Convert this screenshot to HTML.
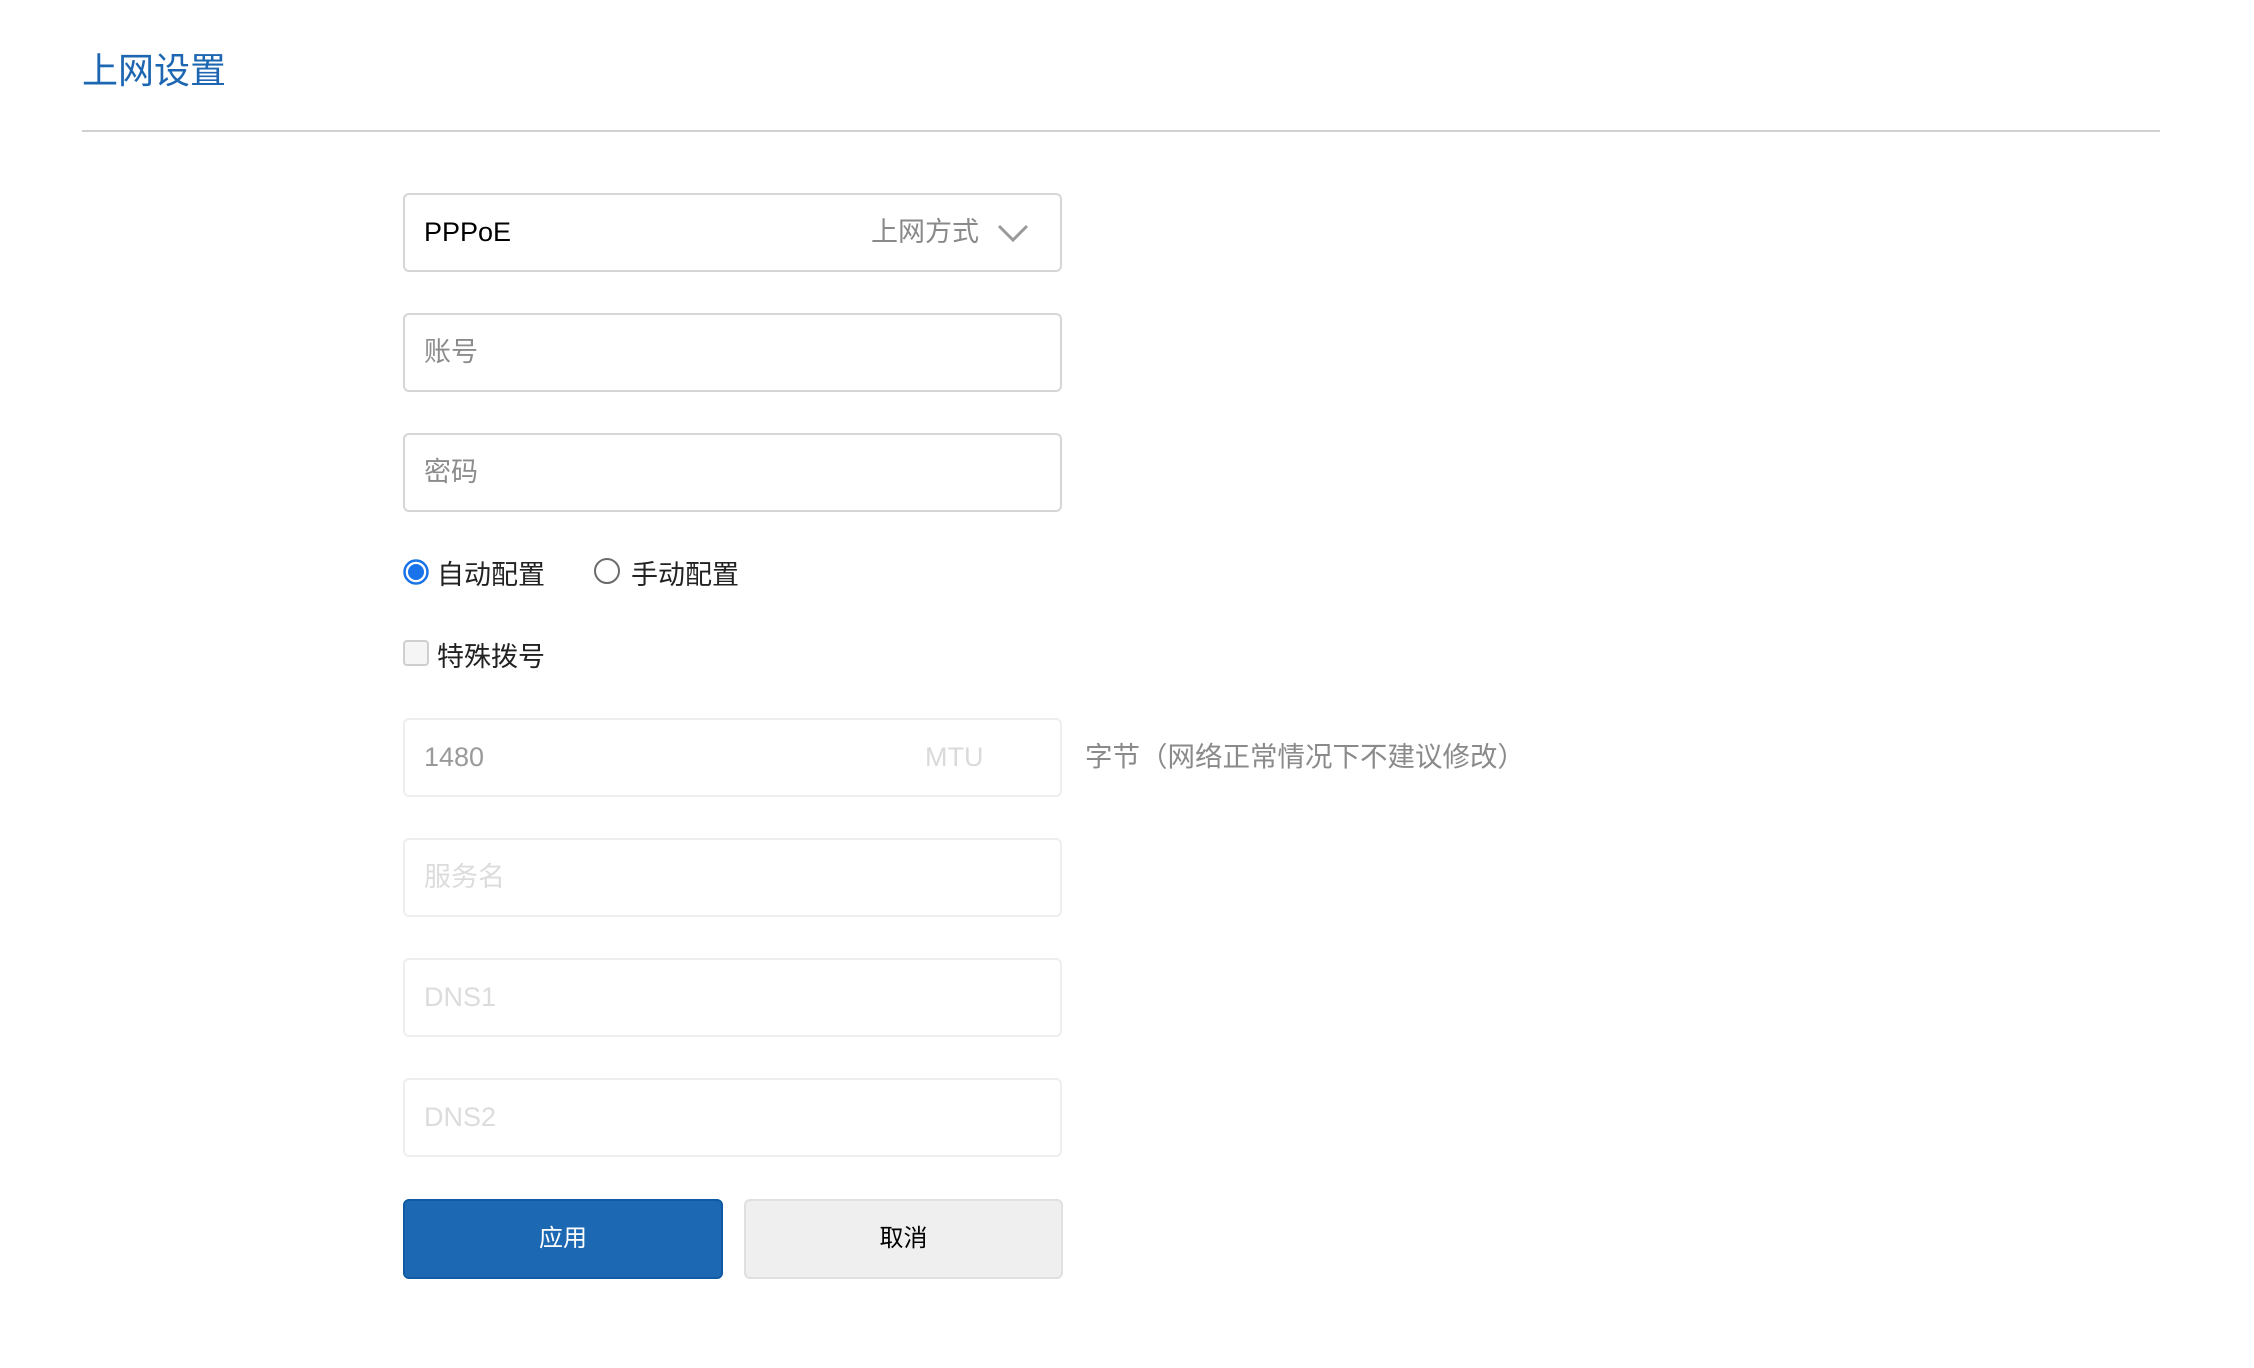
<!DOCTYPE html>
<html><head><meta charset="utf-8"><style>
html,body{margin:0;padding:0;background:#fff;width:2254px;height:1368px;overflow:hidden;font-family:"Liberation Sans","Noto Sans CJK SC",sans-serif;}
.abs{position:absolute}
.title{left:82px;top:49px;font-size:36px;color:#1d67b2;line-height:44px}
.box{position:absolute;left:403px;width:655px;height:75px;border:2px solid #d6d6d6;border-radius:6px;box-sizing:content-box;background:#fff}
.box.dis{border-color:#eeeeee}
.box span{position:absolute;top:0;line-height:75px;font-size:27px}
.lbl{font-size:27px;color:#222;line-height:30px}
.btn{position:absolute;top:1199px;height:76px;border-radius:6px;font-size:24px;line-height:76px;text-align:center}
</style></head><body>
<div class="abs title">上网设置</div>
<div class="abs" style="left:82px;top:130px;width:2078px;height:2px;background:#d0d0d0"></div>

<div class="box" style="top:193px"><span style="left:19px;color:#000">PPPoE</span><span style="left:466px;color:#8a8a8a">上网方式</span>
<svg class="abs" style="left:592px;top:28px" width="32" height="20" viewBox="0 0 32 20"><path d="M2 3 L16 17 L30 3" fill="none" stroke="#9a9a9a" stroke-width="3"/></svg></div>
<div class="box" style="top:313px"><span style="left:19px;color:#8c8c8c">账号</span></div>
<div class="box" style="top:433px"><span style="left:19px;color:#8c8c8c">密码</span></div>

<svg class="abs" style="left:402px;top:558px" width="28" height="28"><circle cx="14" cy="14" r="11.5" fill="#fff" stroke="#1a73e8" stroke-width="2.5"/><circle cx="14" cy="14" r="8" fill="#1a73e8"/></svg>
<div class="abs lbl" style="left:437px;top:560px">自动配置</div>
<svg class="abs" style="left:593px;top:557px" width="28" height="28"><circle cx="14" cy="14" r="12" fill="#fff" stroke="#6b6b6b" stroke-width="2"/></svg>
<div class="abs lbl" style="left:631px;top:560px">手动配置</div>

<div class="abs" style="left:403px;top:640px;width:22px;height:22px;border:2px solid #cfcfcf;border-radius:4px;background:#f5f5f5"></div>
<div class="abs lbl" style="left:437px;top:642px">特殊拨号</div>

<div class="box dis" style="top:718px"><span style="left:19px;color:#9a9a9a">1480</span><span style="left:520px;color:#dadada">MTU</span></div>
<div class="abs" style="left:1085px;top:742px;font-size:27.5px;color:#8a8a8a;line-height:30px">字节（网络正常情况下不建议修改）</div>
<div class="box dis" style="top:838px"><span style="left:19px;color:#dcdcdc">服务名</span></div>
<div class="box dis" style="top:958px"><span style="left:19px;color:#dcdcdc">DNS1</span></div>
<div class="box dis" style="top:1078px"><span style="left:19px;color:#dcdcdc">DNS2</span></div>

<div class="btn" style="left:403px;width:316px;background:#1c68b3;border:2px solid #105aa3;color:#fff">应用</div>
<div class="btn" style="left:744px;width:315px;background:#efefef;border:2px solid #e0e0e0;color:#000">取消</div>
</body></html>
